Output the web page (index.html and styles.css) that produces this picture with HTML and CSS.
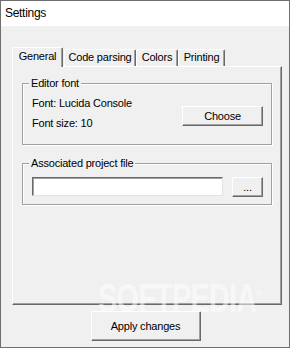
FILE: index.html
```html
<!DOCTYPE html>
<html>
<head>
<meta charset="utf-8">
<link rel="stylesheet" href="styles.css">
</head>
<body>
<div class="window">
  <div class="titlebar">Settings</div>
  <div class="client">
    <div class="tabs">
      <div class="tab tab-general selected">General</div>
      <div class="tab tab-code">Code parsing</div>
      <div class="tab tab-colors">Colors</div>
      <div class="tab tab-printing">Printing</div>
    </div>
    <div class="panel">
      <div class="group group-font">
        <div class="group-title">Editor font</div>
        <div class="font-row">
          <div class="font-info">
            <div class="label">Font: Lucida Console</div>
            <div class="label">Font size: 10</div>
          </div>
          <button class="btn btn-choose">Choose</button>
        </div>
      </div>
      <div class="group group-project">
        <div class="group-title">Associated project file</div>
        <div class="file-row">
          <div class="textbox"></div>
          <button class="btn btn-browse">...</button>
        </div>
      </div>
    </div>
    <div class="footer">
      <button class="btn btn-apply">Apply changes</button>
    </div>
    <div class="watermark">SOFTPEDIA<sup>®</sup></div>
  </div>
</div>
</body>
</html>
```
FILE: styles.css
```css
* { box-sizing: border-box; }
html, body { margin: 0; padding: 0; background: #f0f0f0; }
body {
  font-family: "Liberation Sans", Arial, sans-serif;
  font-size: 11px;
  color: #000;
}
.window {
  width: 290px;
  height: 348px;
  border: 1px solid #6f6f6f;
  background: #f0f0f0;
  display: flex;
  flex-direction: column;
  overflow: hidden;
}
.titlebar {
  height: 25px;
  background: #fff;
  font-size: 12px;
  letter-spacing: -0.3px;
  line-height: 25px;
  padding-left: 4px;
}
.client {
  position: relative;
  flex: 1;
  padding: 21px 0 0 11px;
}
.tabs {
  display: flex;
  align-items: flex-end;
  height: 19px;
  position: relative;
  z-index: 1;
}
.tab {
  height: 17px;
  line-height: 15px;
  text-align: center;
  letter-spacing: -0.2px;
  background: #f0f0f0;
  border-top: 1px solid #fff;
  border-left: 1px solid #fff;
  border-right: 1px solid #696969;
  box-shadow: inset -1px 0 0 #a0a0a0;
  border-radius: 2px 2px 0 0;
}
.tab.selected {
  height: 20px;
  margin-bottom: -1px;
  line-height: 17px;
}
.tab-general { width: 51px; }
.tab-code { width: 72px; margin-left: 1px; }
.tab-colors { width: 42px; }
.tab-printing { width: 47px; }
.panel {
  width: 270px;
  height: 239px;
  border-top: 1px solid #fff;
  border-left: 1px solid #fff;
  border-right: 1px solid #696969;
  border-bottom: 1px solid #696969;
  box-shadow: inset -1px -1px 0 #a0a0a0;
  padding: 16px 9px 0 9px;
}
.group {
  border: 1px solid #a0a0a0;
  box-shadow: 1px 1px 0 #fff, inset 1px 1px 0 #fff;
  padding: 0 8px 0 9px;
}
.group-title {
  display: block;
  width: max-content;
  background: #f0f0f0;
  line-height: 14px;
  margin-top: -8px;
  margin-left: -3px;
  padding: 0 2px;
  letter-spacing: -0.2px;
}
.group-font { height: 62px; }
.group-project { height: 42px; margin-top: 18px; }
.font-row {
  display: flex;
  justify-content: space-between;
  align-items: flex-start;
}
.font-info {
  display: flex;
  flex-direction: column;
  gap: 6px;
  padding-top: 6px;
}
.label { line-height: 14px; letter-spacing: -0.2px; }
.btn {
  font-family: "Liberation Sans", Arial, sans-serif;
  font-size: 11px;
  color: #000;
  background: #f0f0f0;
  border: 1px solid;
  border-color: #fff #696969 #696969 #fff;
  box-shadow: inset -1px -1px 0 #a0a0a0;
  padding: 0;
  margin: 0;
  letter-spacing: -0.2px;
}
.btn-choose {
  width: 81px;
  height: 20px;
  margin-top: 16px;
}
.file-row {
  display: flex;
  align-items: flex-start;
  gap: 9px;
  margin-top: 7px;
}
.textbox {
  width: 191px;
  height: 19px;
  background: #fff;
  border: 1px solid;
  border-color: #696969 #e3e3e3 #e3e3e3 #696969;
  box-shadow: inset 1px 1px 0 #a0a0a0;
}
.btn-browse {
  width: 31px;
  height: 20px;
  line-height: 14px;
}
.footer {
  display: flex;
  justify-content: center;
  padding-right: 11px;
  margin-top: 6px;
}
.btn-apply {
  width: 110px;
  height: 30px;
  margin-left: 1px;
}
.watermark {
  position: absolute;
  left: 97px;
  top: 250px;
  font-size: 40px;
  font-weight: bold;
  letter-spacing: -1px;
  color: rgba(255, 255, 255, 0.55);
  transform: scaleX(0.72);
  transform-origin: left top;
  pointer-events: none;
}
.watermark sup { font-size: 10px; }
```
